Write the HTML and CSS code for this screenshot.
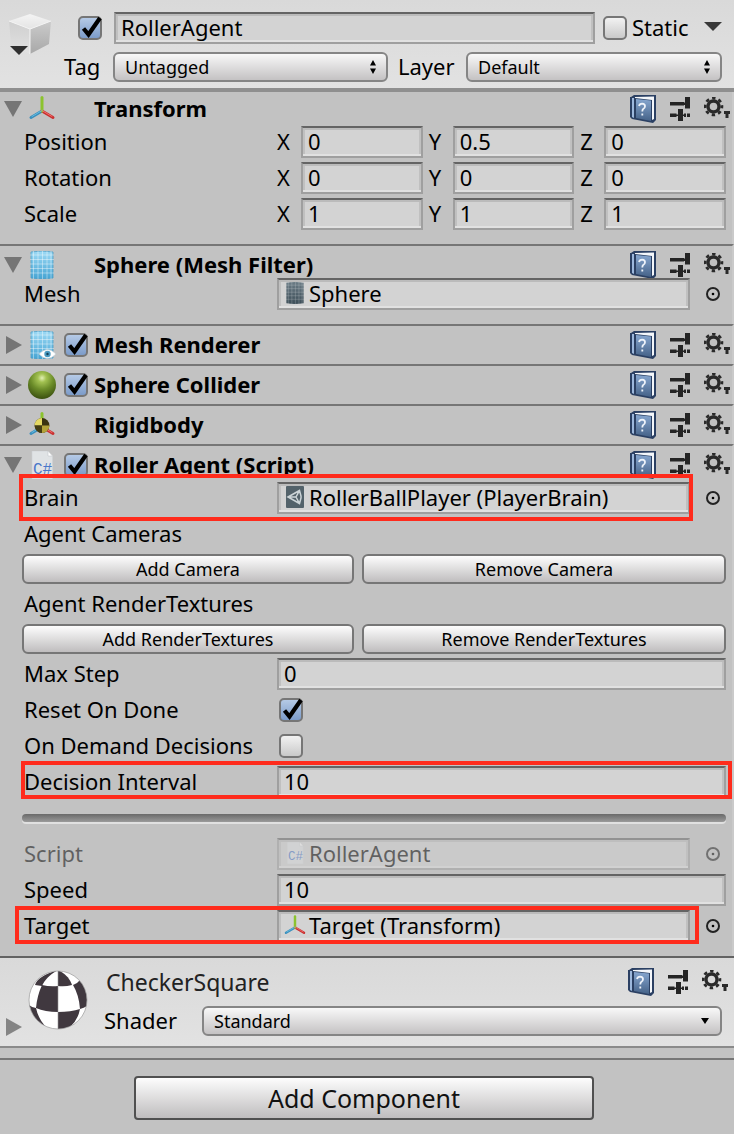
FILE: index.html
```html
<!DOCTYPE html>
<html lang="en">
<head>
<meta charset="utf-8">
<title>Inspector</title>
<meta name="viewport" content="width=device-width, initial-scale=1">
<link rel="stylesheet" href="styles.css">
</head>
<body>
<svg class="sprite" aria-hidden="true">
  <defs>
    <linearGradient id="gBook" x1="0" y1="0" x2="0" y2="1"><stop offset="0" stop-color="#86a6cf"/><stop offset="1" stop-color="#456288"/></linearGradient>
    <linearGradient id="gMesh" x1="0" y1="0" x2="0" y2="1"><stop offset="0" stop-color="#9ddaf5"/><stop offset="1" stop-color="#45a4d3"/></linearGradient>
    <linearGradient id="gMeshDark" x1="0" y1="0" x2="0" y2="1"><stop offset="0" stop-color="#6a7b85"/><stop offset="1" stop-color="#3c4d57"/></linearGradient>
    <radialGradient id="gBall" cx=".5" cy=".25" r=".75"><stop offset="0" stop-color="#e2efb4"/><stop offset=".2" stop-color="#a3c252"/><stop offset=".55" stop-color="#6b8c29"/><stop offset="1" stop-color="#3b5010"/></radialGradient>
    <linearGradient id="gTop" x1="0" y1="0" x2="0" y2="1"><stop offset="0" stop-color="#f4f4f4"/><stop offset="1" stop-color="#e4e4e4"/></linearGradient>
    <linearGradient id="gLeft" x1="0" y1="0" x2="0" y2="1"><stop offset="0" stop-color="#cfcfcf"/><stop offset="1" stop-color="#e2e2e2"/></linearGradient>
    <linearGradient id="gRight" x1="0" y1="0" x2="0" y2="1"><stop offset="0" stop-color="#cbcbcb"/><stop offset="1" stop-color="#a8a8a8"/></linearGradient>
    <clipPath id="disc"><circle cx="30" cy="30" r="29"/></clipPath>
  </defs>
  <symbol id="tick" viewBox="0 0 28 28"><path d="M7.500 14.500L12.500 20.500L24 4" fill="none" stroke="#000" stroke-width="4.200"/></symbol>
  <symbol id="down" viewBox="0 0 18 16"><path d="M0 0H18L9 16Z" fill="#757575"/></symbol>
  <symbol id="right" viewBox="0 0 18 18"><path d="M2 0V18L18 9Z" fill="#757575"/></symbol>
  <symbol id="book" viewBox="0 0 26 28">
    <path d="M1 2L4 0H26V25L23 28L2 24L0 22V2Z" fill="#2b4063"/>
    <path d="M2 3H4V23L2 22Z" fill="#9db8dc"/>
    <path d="M5 2L24 1.500V24L22 25V5L5 3Z" fill="#f4f7fb"/>
    <path d="M6 4L21 5.500V26L6 23Z" fill="url(#gBook)"/>
    <path d="M9 11Q9.500 8.700 12.200 8.700Q15 8.900 15 11.200Q15 13 13.200 14Q12.300 14.700 12.300 16.500M12.300 18.500V20.500" fill="none" stroke="#eef3fa" stroke-width="1.800"/>
  </symbol>
  <symbol id="preset" viewBox="0 0 20 24"><path d="M0 5H14V8.500H0ZM15 0H20V11.500H15ZM14 5.500H16V8H14ZM0 16.500H6.500V20H0ZM8 12H13V24H8ZM6 17.500H15V19H6ZM14 16.500H16V20H14ZM17 16.500H20V20H17Z" fill="#242424"/></symbol>
  <symbol id="gear" viewBox="0 0 26 24">
    <circle cx="9.500" cy="9.500" r="5.500" fill="none" stroke="#2a2a2a" stroke-width="3.400"/>
    <circle cx="9.500" cy="9.500" r="8.400" fill="none" stroke="#2a2a2a" stroke-width="2.800" stroke-dasharray="3.400 3.200" stroke-dashoffset="1.700"/>
    <path d="M20 14H26V17H24.500V21H21.500V17H20Z" fill="#2a2a2a"/>
  </symbol>
  <symbol id="axes" viewBox="0 0 28 28">
    <g fill="none" stroke-linecap="round" stroke-width="3">
      <path d="M14 16L3 22.500" stroke="#3a8fbd"/><path d="M14 16L25 22.500" stroke="#c92f2f"/><path d="M14 16V2.500" stroke="#8cc32e"/>
      <path d="M14 15.500L4 21.500" stroke="#67bbe0" stroke-width="1"/><path d="M14 15.500L24 21.500" stroke="#f07070" stroke-width="1"/>
    </g>
  </symbol>
  <symbol id="meshgrid" viewBox="0 0 28 28"><path d="M5.500 0V28M10 0V28M14.500 0V28M19 0V28M23 0V28M2 4H26M2 8.500H26M2 13H26M2 17.500H26M2 22H26" stroke="#fff" stroke-opacity=".4" fill="none"/></symbol>
  <symbol id="mesh" viewBox="0 0 28 28"><path d="M3 1Q14-1 25 1V27Q14 29 3 27Z" fill="url(#gMesh)" stroke="#4d9ec6" stroke-width=".8"/><use href="#meshgrid" width="28" height="28"/></symbol>
  <symbol id="meshdark" viewBox="0 0 28 28"><path d="M3 1Q14-1 25 1V27Q14 29 3 27Z" fill="url(#gMeshDark)"/><use href="#meshgrid" width="28" height="28" opacity=".6"/></symbol>
  <symbol id="renderer" viewBox="0 0 28 28"><use href="#mesh" width="28" height="28"/><path d="M11 23Q19.500 14 28 23Q19.500 32 11 23Z" fill="#fff" stroke="#b5c5cc" stroke-width=".6"/><circle cx="19.500" cy="23" r="3.200" fill="#4b9ac0"/><circle cx="19.500" cy="23" r="1.200" fill="#163f56"/></symbol>
  <symbol id="ball" viewBox="0 0 28 28"><circle cx="14" cy="14" r="14" fill="url(#gBall)"/></symbol>
  <symbol id="rigid" viewBox="0 0 28 28"><use href="#axes" width="28" height="28"/><circle cx="14" cy="14.500" r="7.400" fill="#3a3410"/><path d="M14 14.500V7.100A7.400 7.400 0 0 0 6.600 14.500Z" fill="#e5d964"/><path d="M14 14.500V21.900A7.400 7.400 0 0 0 21.400 14.500Z" fill="#b3a338"/><path d="M14 14.500H6.600A7.400 7.400 0 0 0 14 21.900Z" fill="#453e14"/></symbol>
  <symbol id="script" viewBox="0 0 28 28"><path d="M4 0H20L24.500 5V28H4Z" fill="#e0e3e5" stroke="#cfd2d4" stroke-width=".6"/><path d="M20 0V5H24.500Z" fill="#fff" stroke="#c5c8ca" stroke-width=".6"/><text x="5" y="23" class="cs-mark">C#</text></symbol>
  <symbol id="unity" viewBox="0 0 18 22"><rect width="18" height="22" rx="1" fill="#53626a"/><path d="M2 11L13.500 4.500L15 10V12L13.500 17.500ZM2 11H10M10 11L13.500 4.500M10 11L13.500 17.500" fill="none" stroke="#ccd4d7" stroke-width="1.500"/></symbol>
  <symbol id="pick" viewBox="0 0 16 16"><circle cx="8" cy="8" r="6" fill="none" stroke="#222" stroke-width="2"/><circle cx="8" cy="8" r="1.300" fill="#000"/></symbol>
  <symbol id="updown" viewBox="0 0 8 14"><path d="M4 0L7 5.500H1ZM4 14L7 8.500H1Z" fill="#000"/></symbol>
  <symbol id="cube" viewBox="0 0 44 42">
    <path d="M1 7L22 15V40L3 30Z" fill="url(#gLeft)"/><path d="M22 15L43 7L41 30L22 40Z" fill="url(#gRight)"/><path d="M1 7L22 0L43 7L22 15Z" fill="url(#gTop)"/><path d="M1 7L22 15L43 7M22 15V40" fill="none" stroke="#f4f4f4" stroke-width="1"/>
    <path d="M2 32H20L11 41Z" fill="#303030"/>
  </symbol>
  <symbol id="checker" viewBox="0 0 60 60">
    <g clip-path="url(#disc)"><rect width="60" height="60" fill="#fff"/>
      <g fill="#40383f"><path d="M30 0C38 4 42 9 44 15Q37 17 30 16Z"/><path d="M30 0C20 3 9 8 7 15L14 16C17 9 23 4 30 0Z"/>
      <path d="M14 15Q22 17 30 16V42Q17 42 8 38Q9 26 14 15Z"/><path d="M45 15Q50 13 52 10L62 20V34Q58 37 52 39Q51 25 45 15Z"/>
      <path d="M30 42Q43 42 52 39Q50 50 42 57L30 60Z"/><path d="M0 34Q3 37 8 38Q10 48 17 56L5 54Z"/></g>
      <path d="M30 0V60" stroke="#999" stroke-width=".6"/></g>
    <circle cx="30" cy="30" r="29" fill="none" stroke="#999" stroke-width=".7"/>
  </symbol>
</svg>

<main class="inspector">
  <header class="object-head">
    <button class="plain cube" aria-label="Object icon"><svg><use href="#cube"/></svg></button>
    <div class="object-fields">
      <div class="object-line">
        <span class="check name-check"><input type="checkbox" checked aria-label="Active"><svg><use href="#tick"/></svg></span>
        <input class="field name-field" type="text" value="RollerAgent" aria-label="Name">
        <span class="check"><input type="checkbox" id="static"><svg><use href="#tick"/></svg></span>
        <label class="static-label" for="static">Static</label>
        <button class="plain static-menu" aria-label="Static options"><svg viewBox="0 0 18 9"><path d="M0 0H18L9 9Z"/></svg></button>
      </div>
      <div class="object-line">
        <label class="tag-label" for="tag">Tag</label>
        <span class="drop tag-drop"><select id="tag"><option>Untagged</option></select><svg class="drop-mark"><use href="#updown"/></svg></span>
        <label class="layer-label" for="layer">Layer</label>
        <span class="drop layer-drop"><select id="layer"><option>Default</option></select><svg class="drop-mark"><use href="#updown"/></svg></span>
      </div>
    </div>
  </header>

  <section class="component first">
    <div class="comp-head">
      <button class="plain fold" aria-label="Collapse"><svg class="fold-down"><use href="#down"/></svg></button>
      <svg class="comp-icon"><use href="#axes"/></svg><span class="check-gap"></span>
      <h2>Transform</h2>
      <div class="tools"><button class="plain" aria-label="Help"><svg class="i-book"><use href="#book"/></svg></button><button class="plain" aria-label="Presets"><svg class="i-preset"><use href="#preset"/></svg></button><button class="plain" aria-label="Options"><svg class="i-gear"><use href="#gear"/></svg></button></div>
    </div>
    <div class="props">
      <div class="row"><span class="label">Position</span><div class="vector"><label>X<input class="field" value="0"></label><label>Y<input class="field" value="0.5"></label><label>Z<input class="field" value="0"></label></div></div>
      <div class="row"><span class="label">Rotation</span><div class="vector"><label>X<input class="field" value="0"></label><label>Y<input class="field" value="0"></label><label>Z<input class="field" value="0"></label></div></div>
      <div class="row"><span class="label">Scale</span><div class="vector"><label>X<input class="field" value="1"></label><label>Y<input class="field" value="1"></label><label>Z<input class="field" value="1"></label></div></div>
    </div>
  </section>

  <section class="component">
    <div class="comp-head tight">
      <button class="plain fold" aria-label="Collapse"><svg class="fold-down"><use href="#down"/></svg></button>
      <svg class="comp-icon"><use href="#mesh"/></svg><span class="check-gap"></span>
      <h2>Sphere (Mesh Filter)</h2>
      <div class="tools"><button class="plain" aria-label="Help"><svg class="i-book"><use href="#book"/></svg></button><button class="plain" aria-label="Presets"><svg class="i-preset"><use href="#preset"/></svg></button><button class="plain" aria-label="Options"><svg class="i-gear"><use href="#gear"/></svg></button></div>
    </div>
    <div class="props">
      <div class="row"><span class="label">Mesh</span><button class="field object"><svg viewBox="3 0 22 28"><use href="#meshdark" width="28" height="28"/></svg>Sphere</button><button class="plain picker" aria-label="Pick mesh"><svg><use href="#pick"/></svg></button></div>
    </div>
  </section>

  <section class="component">
    <div class="comp-head">
      <button class="plain fold" aria-label="Expand"><svg class="fold-right"><use href="#right"/></svg></button>
      <svg class="comp-icon"><use href="#renderer"/></svg>
      <span class="check"><input type="checkbox" checked aria-label="Mesh Renderer enabled"><svg><use href="#tick"/></svg></span>
      <h2>Mesh Renderer</h2>
      <div class="tools"><button class="plain" aria-label="Help"><svg class="i-book"><use href="#book"/></svg></button><button class="plain" aria-label="Presets"><svg class="i-preset"><use href="#preset"/></svg></button><button class="plain" aria-label="Options"><svg class="i-gear"><use href="#gear"/></svg></button></div>
    </div>
  </section>

  <section class="component">
    <div class="comp-head">
      <button class="plain fold" aria-label="Expand"><svg class="fold-right"><use href="#right"/></svg></button>
      <svg class="comp-icon"><use href="#ball"/></svg>
      <span class="check"><input type="checkbox" checked aria-label="Sphere Collider enabled"><svg><use href="#tick"/></svg></span>
      <h2>Sphere Collider</h2>
      <div class="tools"><button class="plain" aria-label="Help"><svg class="i-book"><use href="#book"/></svg></button><button class="plain" aria-label="Presets"><svg class="i-preset"><use href="#preset"/></svg></button><button class="plain" aria-label="Options"><svg class="i-gear"><use href="#gear"/></svg></button></div>
    </div>
  </section>

  <section class="component">
    <div class="comp-head">
      <button class="plain fold" aria-label="Expand"><svg class="fold-right"><use href="#right"/></svg></button>
      <svg class="comp-icon"><use href="#rigid"/></svg><span class="check-gap"></span>
      <h2>Rigidbody</h2>
      <div class="tools"><button class="plain" aria-label="Help"><svg class="i-book"><use href="#book"/></svg></button><button class="plain" aria-label="Presets"><svg class="i-preset"><use href="#preset"/></svg></button><button class="plain" aria-label="Options"><svg class="i-gear"><use href="#gear"/></svg></button></div>
    </div>
  </section>

  <section class="component">
    <div class="comp-head snug">
      <button class="plain fold" aria-label="Collapse"><svg class="fold-down"><use href="#down"/></svg></button>
      <svg class="comp-icon"><use href="#script"/></svg>
      <span class="check"><input type="checkbox" checked aria-label="Roller Agent enabled"><svg><use href="#tick"/></svg></span>
      <h2>Roller Agent (Script)</h2>
      <div class="tools"><button class="plain" aria-label="Help"><svg class="i-book"><use href="#book"/></svg></button><button class="plain" aria-label="Presets"><svg class="i-preset"><use href="#preset"/></svg></button><button class="plain" aria-label="Options"><svg class="i-gear"><use href="#gear"/></svg></button></div>
    </div>
    <div class="props">
      <div class="row"><span class="label">Brain</span><button class="field object"><svg><use href="#unity"/></svg>RollerBallPlayer (PlayerBrain)</button><button class="plain picker" aria-label="Pick brain"><svg><use href="#pick"/></svg></button><span class="mark mark-brain"></span></div>
      <div class="row"><span class="label">Agent Cameras</span></div>
      <div class="pair"><button class="btn">Add Camera</button><button class="btn">Remove Camera</button></div>
      <div class="row"><span class="label">Agent RenderTextures</span></div>
      <div class="pair"><button class="btn">Add RenderTextures</button><button class="btn">Remove RenderTextures</button></div>
      <div class="row"><label class="label" for="max">Max Step</label><input class="field" id="max" value="0"></div>
      <div class="row"><label class="label" for="reset">Reset On Done</label><span class="check in-row"><input type="checkbox" id="reset" checked><svg><use href="#tick"/></svg></span></div>
      <div class="row"><label class="label" for="demand">On Demand Decisions</label><span class="check in-row"><input type="checkbox" id="demand"><svg><use href="#tick"/></svg></span></div>
      <div class="row"><label class="label" for="interval">Decision Interval</label><input class="field" id="interval" value="10"><span class="mark mark-interval"></span></div>
      <div class="divider"></div>
      <div class="row disabled"><span class="label">Script</span><button class="field object" disabled><svg viewBox="3 0 22 28"><use href="#script" width="28" height="28"/></svg>RollerAgent</button><button class="plain picker" disabled aria-label="Pick script"><svg><use href="#pick"/></svg></button></div>
      <div class="row"><label class="label" for="speed">Speed</label><input class="field" id="speed" value="10"></div>
      <div class="row"><span class="label">Target</span><button class="field object"><svg viewBox="3 0 22 26"><use href="#axes" width="28" height="28"/></svg>Target (Transform)</button><button class="plain picker" aria-label="Pick target"><svg><use href="#pick"/></svg></button><span class="mark mark-target"></span></div>
    </div>
  </section>

  <section class="material">
    <button class="plain fold material-fold" aria-label="Expand"><svg class="fold-right"><use href="#right"/></svg></button>
    <svg class="preview"><use href="#checker"/></svg>
    <div class="material-body">
      <div class="material-top">
        <span class="material-name">CheckerSquare</span>
        <div class="tools"><button class="plain" aria-label="Help"><svg class="i-book"><use href="#book"/></svg></button><button class="plain" aria-label="Presets"><svg class="i-preset"><use href="#preset"/></svg></button><button class="plain" aria-label="Options"><svg class="i-gear"><use href="#gear"/></svg></button></div>
      </div>
      <div class="shader-line">
        <label for="shader">Shader</label>
        <span class="drop shader-drop"><select id="shader"><option>Standard</option></select><svg class="drop-mark one" viewBox="0 0 8 6"><path d="M0 0H8L4 6Z"/></svg></span>
      </div>
    </div>
  </section>

  <footer class="add-area"><button class="btn add">Add Component</button></footer>
</main>
</body>
</html>
```
FILE: styles.css
```css
* { box-sizing: border-box; }

body {
  margin: 0;
  background: #c2c2c2;
  color: #000;
  font: 22px/30px "Noto Sans", sans-serif;
}

button, input, select { font: inherit; color: inherit; }
svg { display: block; flex: none; overflow: visible; }
.sprite { position: absolute; width: 0; height: 0; }
.cs-mark { font: 16px "Liberation Mono", monospace; fill: #4a77c9; }

.plain { padding: 0; border: 0; background: none; display: flex; }

/* object header */
.object-head {
  display: flex;
  gap: 12px;
  padding: 12px 12px 6px 8px;
  background: linear-gradient(#d9d9d9, #e2e2e2);
  border-bottom: 4px solid #8f8f8f;
}
.cube { align-self: flex-start; padding-top: 2px; }
.cube svg { width: 44px; height: 42px; }
.object-fields { flex: 1; display: grid; gap: 8px; min-width: 0; }
.object-line { display: flex; align-items: center; }
.object-line label { padding-bottom: 2px; line-height: 28px; }
.name-check { margin: 0 12px 0 14px; }
.name-field { flex: 1; min-width: 0; margin-right: 8px; }
.static-label { margin-left: 5px; flex: 0 0 72px; }
.static-menu { padding-bottom: 4px; }
.static-menu svg { width: 18px; height: 9px; fill: #383838; }
.tag-label { flex: 0 0 49px; }
.tag-drop { flex: 275; }
.layer-label { flex: 0 0 68px; margin-left: 10px; }
.layer-drop { flex: 256; }

.drop { position: relative; display: flex; min-width: 0; }
select {
  appearance: none;
  width: 100%;
  height: 30px;
  padding: 0 28px 0 10px;
  border: 2px solid #858585;
  border-radius: 6px;
  background: linear-gradient(#f8f8f8, #c4c2c3);
  font-size: 18px;
  line-height: 24px;
}
.drop-mark { position: absolute; right: 11px; top: 8px; width: 8px; height: 14px; pointer-events: none; }
.drop-mark.one { right: 13px; top: 12px; height: 6px; }

.check { position: relative; flex: none; width: 24px; height: 24px; display: block; }
.check input {
  appearance: none;
  display: block;
  width: 24px;
  height: 24px;
  margin: 0;
  border: 2px solid #767676;
  border-radius: 5px;
  background: linear-gradient(#f2f2f2, #c9c9c9);
}
.check input:checked { background: linear-gradient(#b5cae6, #7c9cca); }
.check svg { display: none; position: absolute; left: -2px; top: -2px; width: 28px; height: 28px; pointer-events: none; }
.check input:checked + svg { display: block; }

.field {
  height: 32px;
  min-width: 0;
  padding: 0 5px 2px;
  border: 2px solid #9f9f9f;
  border-top-color: #646464;
  border-radius: 0;
  background: #d3d3d3;
  box-shadow: inset 0 2px #bbb, inset 0 -2px #e1e1e1, inset 2px 0 #c0c0c0, inset -2px 0 #c0c0c0;
  line-height: 26px;
  text-align: left;
}

/* components */
.component { border-top: 2px solid #767676; border-right: 2px solid #cacaca; }
.first { border-top: 0; }
.comp-head { display: flex; align-items: center; height: 38px; padding: 0 2px 0 4px; }
.first .comp-head { height: 34px; }
.tight { margin-bottom: -6px; }
.snug { margin-bottom: -2px; }
.fold { flex: 0 0 24px; }
.fold-down { width: 18px; height: 16px; }
.fold-right { width: 18px; height: 18px; }
.comp-icon { width: 28px; height: 28px; margin-right: 8px; }
.check-gap { flex: 0 0 24px; }
h2 { flex: 1; margin: 0 0 0 6px; padding-bottom: 2px; font-size: 22px; font-weight: 700; line-height: 30px; white-space: nowrap; }

.tools { display: flex; align-items: center; gap: 14px; }
.i-book { width: 26px; height: 28px; }
.i-preset { width: 20px; height: 24px; }
.i-gear { width: 26px; height: 24px; }

.props { display: grid; gap: 4px; padding: 0 6px 14px 22px; }
.row { position: relative; display: flex; align-items: center; height: 32px; }
.label { flex: 0 0 255px; padding: 0 0 2px 2px; line-height: 28px; white-space: nowrap; }
.row > .field { flex: 1; }
.vector { flex: 1; display: grid; grid-template-columns: repeat(3, 1fr); gap: 6px; }
.vector label { display: grid; grid-template-columns: 24px 1fr; }
.object { display: flex; align-items: center; gap: 5px; padding-left: 7px; white-space: nowrap; }
.object svg { width: 18px; height: 22px; }
.picker { flex: 0 0 36px; padding-left: 15px; }
.picker svg { width: 16px; height: 16px; }
.in-row { margin-left: 2px; }
.disabled { opacity: .5; }

.pair { display: grid; grid-template-columns: 83fr 91fr; gap: 8px; }
.btn {
  height: 30px;
  padding: 0 6px;
  border: 2px solid #767676;
  border-radius: 6px;
  background: linear-gradient(#fdfdfd, #bfbdbe);
  font-size: 18px;
  line-height: 24px;
}
.divider {
  height: 8px;
  margin: 12px 0;
  border-radius: 4px;
  background: linear-gradient(#696969, #9a9a9a);
  box-shadow: 0 2px #e0e0e0;
}

/* highlight frames around rows */
.mark { position: absolute; z-index: 1; border: 4px solid #ff2b1c; pointer-events: none; }
.mark-brain { inset: -8px 33px -7px -3px; }
.mark-interval { inset: -5px -6px -1px -1px; }
.mark-target { inset: -4px 27px -2px -7px; }

/* material */
.material {
  display: flex;
  padding: 8px 6px 10px 4px;
  border-top: 2px solid #626262;
  border-bottom: 2px solid #8a8a8a;
  background: linear-gradient(#d9d9d9, #e2e2e2);
}
.material-fold { align-self: flex-end; }
.material-fold svg { opacity: .85; }
.preview { width: 60px; height: 60px; margin: 4px 16px 0 0; }
.material-body { flex: 1; display: grid; gap: 8px; align-content: start; min-width: 0; }
.material-top { display: flex; justify-content: space-between; align-items: center; height: 32px; padding-left: 2px; }
.material-name { font-size: 23px; color: #222; }
.shader-line { display: flex; align-items: center; padding-right: 6px; }
.shader-line label { flex: 0 0 98px; padding-bottom: 2px; line-height: 28px; }
.shader-drop { flex: 1; }

.add-area { margin-top: 10px; padding: 16px 140px 14px 134px; border-top: 2px solid #767676; display: flex; }
.add { flex: 1; height: 44px; border-color: #505050; border-radius: 4px; font-size: 25px; line-height: 36px; color: #111; }
```
